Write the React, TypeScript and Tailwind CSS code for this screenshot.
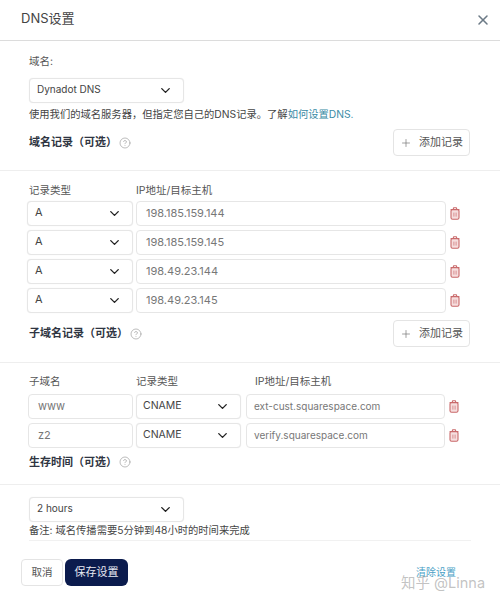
import { ChevronDown, HelpCircle, Plus, X } from 'lucide-react'

function Select({ value, className }: { value: string; className: string }) {
  return (
    <div className={`flex items-center justify-between rounded border border-[#e6e6e6] bg-white shadow-[0_0_1px_#e5e5e5] text-[#444] ${className}`}>
      <span className="-mt-0.5">{value}</span>
      <ChevronDown size={15} strokeWidth={2.2} className="text-[#222]" />
    </div>
  )
}

function TextBox({ value, className }: { value: string; className: string }) {
  return (
    <div className={`flex items-center rounded border border-[#e6e6e6] bg-white text-[#777] ${className}`}>
      {value}
    </div>
  )
}

function Trash({ className }: { className: string }) {
  return (
    <svg width="10" height="13" viewBox="0 0 10 13" fill="none" className={`shrink-0 ${className}`}>
      <rect x="1" y="2.5" width="8" height="9.8" rx="1.6" fill="#f6dede" stroke="#c96a6b" strokeWidth="1.1" />
      <path d="M0.6 2.6H9.4M3.4 2.4V1.2C3.4 0.9 3.6 0.7 3.9 0.7H6.1C6.4 0.7 6.6 0.9 6.6 1.2V2.4" stroke="#c96a6b" strokeWidth="1.1" />
      <path d="M3.6 5.6V9.6M5 5.6V9.6M6.4 5.6V9.6" stroke="#d99192" strokeWidth="0.7" />
    </svg>
  )
}

function Heading({ text }: { text: string }) {
  return (
    <div className="flex items-center gap-[2px]">
      <span className="text-[11px] font-semibold text-[#2f3542]">{text}</span>
      <HelpCircle size={12} strokeWidth={1.3} className="text-[#999]" />
    </div>
  )
}

function AddButton() {
  return (
    <button className="flex h-[27px] w-[77px] items-center justify-center gap-[7px] rounded border border-[#e4e4e4] bg-white text-[11px] text-[#555]">
      <Plus size={12} strokeWidth={1.4} className="text-[#777]" />
      添加记录
    </button>
  )
}

const aRecords = ['198.185.159.144', '198.185.159.145', '198.49.23.144', '198.49.23.145']

const subRecords = [
  { name: 'www', target: 'ext-cust.squarespace.com' },
  { name: 'z2', target: 'verify.squarespace.com' },
]

export default function App() {
  return (
    <div className="relative h-[603px] w-[500px] overflow-hidden bg-white font-['Inter','Noto_Sans_CJK_SC',sans-serif] text-[11px] text-[#444]">
      <div className="flex h-[41px] items-center justify-between border-b border-[#dcdcdc] pl-[21px] pr-[9px]">
        <h1 className="-mt-0.5 text-[13px] text-[#444]">DNS设置</h1>
        <X size={16} strokeWidth={2.3} className="text-[#6c7a86]" />
      </div>

      <section className="h-[130px] border-b border-[#eeeeee] pl-[29px] pr-[30px] pt-[13px]">
        <div className="h-[16px] text-[10.5px] text-[#555]">域名:</div>
        <Select value="Dynadot DNS" className="mt-[8px] h-[25px] w-[155px] pl-[7px] pr-[10px] text-[10px]" />
        <p className="mt-[3px] h-[17px] whitespace-nowrap text-[10.3px] leading-[17px] text-[#444]">
          使用我们的域名服务器，但指定您自己的DNS记录。了解<span className="text-[#3b8ca6]">如何设置DNS.</span>
        </p>
        <div className="mt-[6px] flex items-center justify-between">
          <Heading text="域名记录（可选）" />
          <AddButton />
        </div>
      </section>

      <section className="h-[192px] border-b border-[#eeeeee] pl-[27px] pr-[30px] pt-[12px]">
        <div className="flex h-[15px] items-center pl-[2px] text-[10.5px] text-[#555]">
          <span className="w-[107px]">记录类型</span>
          <span>IP地址/目标主机</span>
        </div>
        <div className="mt-[3px] flex flex-col gap-[4px]">
          {aRecords.map((ip) => (
            <div key={ip} className="flex h-[25px] items-center gap-[3px]">
              <Select value="A" className="h-full w-[106px] pl-[7px] pr-[10px]" />
              <TextBox value={ip} className="h-full w-[310px] pl-[9px]" />
              <Trash className="ml-[1px]" />
            </div>
          ))}
        </div>
        <div className="mt-[7px] flex items-center justify-between pl-[2px]">
          <Heading text="子域名记录（可选）" />
          <AddButton />
        </div>
      </section>

      <section className="h-[122px] border-b border-[#eeeeee] pl-[28px] pt-[11px]">
        <div className="flex h-[16px] items-center pl-[1px] text-[10.5px] text-[#555]">
          <span className="w-[107px]">子域名</span>
          <span className="w-[119px]">记录类型</span>
          <span>IP地址/目标主机</span>
        </div>
        <div className="mt-[4px] flex flex-col gap-[4px]">
          {subRecords.map((r) => (
            <div key={r.name} className="flex h-[25px] items-center">
              <TextBox value={r.name} className="h-full w-[105px] pl-[9px]" />
              <Select value="CNAME" className="ml-[3px] h-full w-[105px] pl-[6px] pr-[10px] text-[10.5px]" />
              <TextBox value={r.target} className="ml-[5px] h-full w-[199px] pl-[7px] text-[10px]" />
              <Trash className="ml-[4px]" />
            </div>
          ))}
        </div>
        <div className="mt-[6px] pl-[1px]">
          <Heading text="生存时间（可选）" />
        </div>
      </section>

      <section className="px-[29px] pt-[12px]">
        <Select value="2 hours" className="h-[25px] w-[155px] pl-[7px] pr-[10px] text-[10px]" />
        <p className="h-[17px] text-[10.3px] leading-[17px] text-[#444]">备注: 域名传播需要5分钟到48小时的时间来完成</p>
        <div className="mt-[1px] h-px bg-[#f1f1f1]" />
      </section>

      <footer className="mt-[18px] flex items-center justify-between pl-[21px] pr-[44px]">
        <div className="flex gap-[2px]">
          <button className="h-[27px] w-[42px] rounded border border-[#e4e4e4] bg-white text-[10.5px] text-[#555]">取消</button>
          <button className="h-[27px] w-[63px] rounded-md bg-[#0b1b4d] text-[#e7eaf2]">保存设置</button>
        </div>
        <a className="text-[10px] text-[#4a9fc6]">清除设置</a>
      </footer>

      <div className="absolute left-[401px] top-[572px] text-[14.5px] text-[#9a9a9a]/60">知乎 @Linna</div>
    </div>
  )
}
